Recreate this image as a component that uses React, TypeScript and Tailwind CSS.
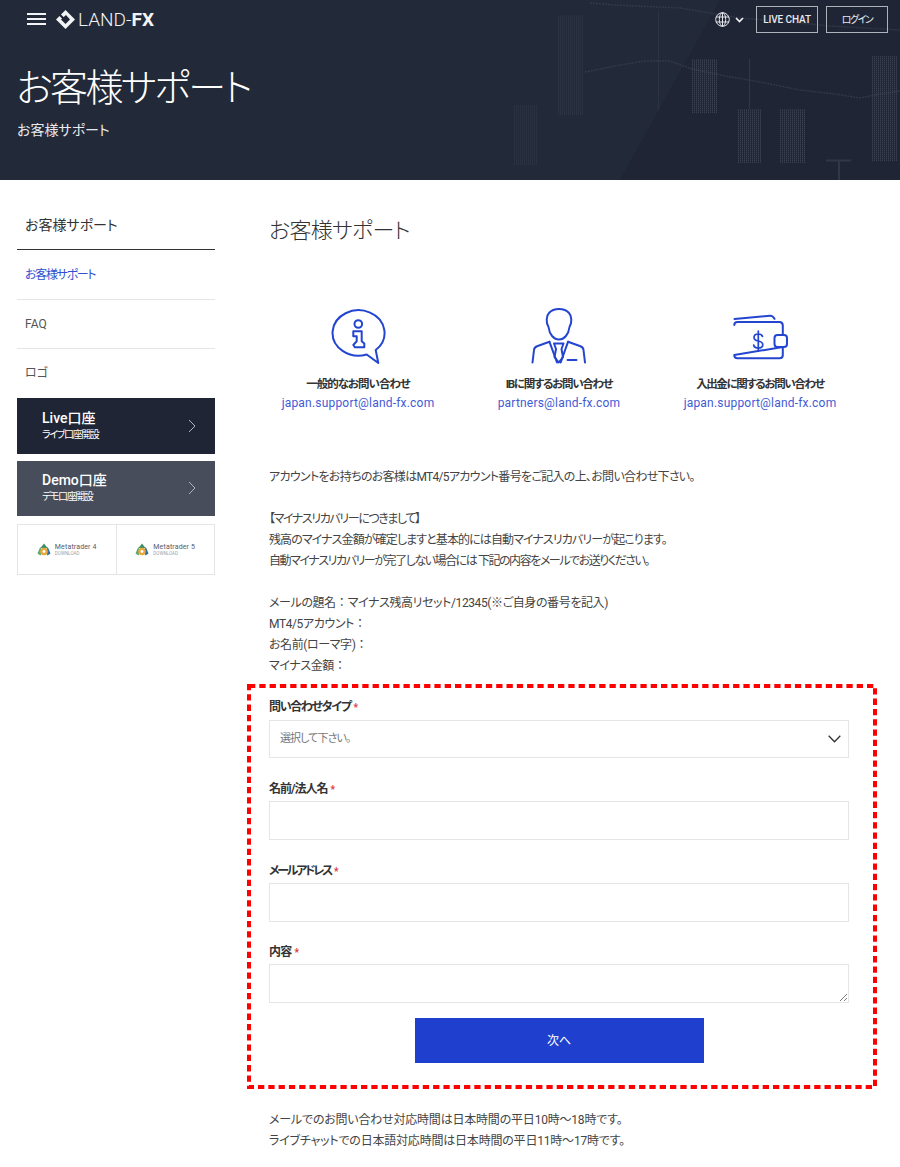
import React from "react";

function HeaderChart() {
  const candles = [
    [513, 105, 24, 60, 0.3],
    [558, 15, 25, 100, 0.35],
    [692, 59, 25, 54, 0.8],
    [737, 109, 25, 54, 0.8],
    [780, 109, 25, 54, 0.8],
    [872, 56, 25, 105, 0.8],
  ];
  return (
    <svg className="absolute inset-0" width="900" height="180" viewBox="0 0 900 180">
      <defs>
        <pattern id="dots" width="2" height="2" patternUnits="userSpaceOnUse">
          <rect width="1" height="2" fill="#a8afc0" opacity="0.12" />
          <rect width="1" height="1" fill="#a8afc0" opacity="0.14" />
        </pattern>
      </defs>
      <polygon points="0,0 720,0 620,180 0,180" fill="#222938" />
      {candles.map(([x, y, w, h, o], i) => (
        <rect key={i} x={x} y={y} width={w} height={h} fill="url(#dots)" opacity={o} />
      ))}
      <g stroke="#4a5262" fill="none" opacity="0.4">
        <line x1="658.5" y1="10" x2="658.5" y2="110" opacity="0.6" />
        <line x1="749.500" y1="59" x2="749.500" y2="109" />
        <line x1="826" y1="160.500" x2="851" y2="160.500" strokeWidth="2" />
        <line x1="839" y1="160" x2="839" y2="180" strokeWidth="2" />
        <polyline strokeDasharray="2 1" strokeWidth="1.500" points="585,72 620,65 645,61 670,61 692,69 720,75 760,82 800,90 835,94 860,98 880,94 900,91" />
        <polyline strokeDasharray="2 1" strokeWidth="1.500" points="590,3 615,5 680,8 740,18 800,23 830,26 900,30" />
      </g>
    </svg>
  );
}

function InfoIcon() {
  return (
    <svg width="60" height="60" viewBox="0 0 60 60" fill="none" stroke="#2345d0" strokeWidth="2" strokeLinejoin="round" strokeLinecap="round">
      <path d="M47.700 43 L50.300 56 L38.700 47.500 A26 22.700 0 1 1 47.700 43 Z" />
      <circle cx="30.300" cy="17" r="3.800" />
      <path d="M25.300 24.300 H33.700 V34.300 L36.300 36.600 V40.300 H27 L25.300 38 L28.700 34.300 V29.300 H25.300 Z" />
    </svg>
  );
}

function PersonIcon() {
  return (
    <svg width="60" height="60" viewBox="0 2 60 60" fill="none" stroke="#2345d0" strokeWidth="2" strokeLinejoin="round" strokeLinecap="round">
      <path d="M19.500 22 C17 18 17 11 20 8 C23 4.500 27 4 30 4 C33 4 37 4.500 40 8 C43 11 43 18 40.500 22 C39.500 30 35 34.500 30 34.500 C25 34.500 20.500 30 19.500 22 Z" />
      <path d="M3.500 57.500 L5 45 C5.200 43 6 42 8 41.200 L20.500 36.800" />
      <path d="M56 57.500 L54.500 45 C54.300 43 53.500 42 51.500 41.200 L39 36.800" />
      <path d="M20.500 36.800 L28 57.500 M39 36.800 L31.700 57.500" />
      <path d="M25 38.500 H34.500 L32.500 44 L34 52 L29.800 57.500 L25.500 52 L27 44 Z" />
      <path d="M38.500 55 H47.500" />
    </svg>
  );
}

function WalletIcon() {
  return (
    <svg width="55" height="46" viewBox="0 0 55 46" fill="none" stroke="#2345d0" strokeWidth="2" strokeLinejoin="round" strokeLinecap="round">
      <path d="M1.500 5 L37 1.800 C39 1.700 40.500 3 41.500 4.800" />
      <path d="M1.300 11 C1.300 9 2.500 8 4.500 8 H46.500 C48.500 8 49.800 9.500 49.800 11.500 V21 M49.800 33 V41 C49.800 43 48.500 44.300 46.500 44.300 H4.500 C2.500 44.300 1.300 43 1.300 41 Z" />
      <rect x="41.500" y="21" width="12.500" height="12" rx="3" />
      <path d="M29.500 22.500 C29 20.800 27.500 20 25.300 20 C22.800 20 21 21.300 21 23.500 C21 25.800 22.800 26.500 25.300 27 C27.800 27.500 29.800 28.300 29.800 30.700 C29.800 33 27.800 34 25.300 34 C22.800 34 21 33 20.700 31 M25.300 17 V37" strokeWidth="1.700" />
    </svg>
  );
}

function MtLogo({ n }: { n: string }) {
  return (
    <div className="flex flex-1 items-center justify-center gap-[4px]">
      <svg width="14" height="14" viewBox="0 0 14 14">
        <path d="M7 0.500 L10.500 5 L3.500 5 Z" fill="#3f8f62" />
        <path d="M3.200 4 L0.500 10.500 L3.500 12.500 L5.500 8 Z" fill="#5aa777" />
        <path d="M10.800 4 L13.500 10.500 L10.500 12.500 L8.500 8 Z" fill="#2f6f9f" />
        <circle cx="7" cy="8.500" r="3.800" fill="#eba83a" />
        <circle cx="7" cy="8.500" r="1.400" fill="#fff" />
      </svg>
      <div className="flex flex-col">
        <span className="font-['Roboto',sans-serif] text-[7px] leading-[8px] tracking-[0.15px] text-[#555b66]">Metatrader {n}</span>
        <span className="font-['Roboto',sans-serif] text-[4.500px] leading-[6px] text-[#9a9fa8]">DOWNLOAD</span>
      </div>
    </div>
  );
}

function CtaCard({ title, sub, cls }: { title: string; sub: string; cls: string }) {
  return (
    <div className={`flex items-center justify-between pl-[25px] pr-[19px] ${cls}`}>
      <div className="flex flex-col pb-[3px]">
        <span className="text-[14px] font-medium leading-[20px] text-white">{title}</span>
        <span className="text-[10px] leading-[14px] tracking-[-1.4px] text-white">{sub}</span>
      </div>
      <svg className="mb-[1px]" width="8" height="14" viewBox="0 0 8 14" fill="none" stroke="#aeb3bd" strokeWidth="1">
        <path d="M1 1 L7 7 L1 13" />
      </svg>
    </div>
  );
}

function Label({ children, track }: { children: React.ReactNode; track: string }) {
  return (
    <div className="h-[14px] text-[12px] font-bold leading-[14px] text-[#333]">
      <span className={track}>{children}</span>
      <span className="ml-[3px] text-[10px] text-[#d9363e]">*</span>
    </div>
  );
}

function Contact({ icon, title, mail, track }: { icon: React.ReactNode; title: string; mail: string; track: string }) {
  return (
    <div className="flex w-[178px] flex-col items-center">
      <div className="flex h-[60px] items-center justify-center">{icon}</div>
      <div className={`mt-[8px] text-[11.500px] font-bold leading-[18px] text-[#333] ${track}`}>{title}</div>
      <div className="font-['Roboto',sans-serif] text-[12px] leading-[20px] tracking-[0.2px] text-[#3f5bd6]">{mail}</div>
    </div>
  );
}

function Colon() {
  return <span className="tracking-normal [font-feature-settings:normal]">：</span>;
}

export default function App() {
  return (
    <div className="h-[1167px] w-[900px] overflow-hidden bg-white font-['Roboto','Noto_Sans_CJK_JP',sans-serif] [font-feature-settings:'palt']">
      <header className="relative h-[180px] bg-[#1f2535]">
        <HeaderChart />
        <div className="relative flex h-[39px] items-center pl-[27px] pr-[12px]">
          <svg width="20" height="13" viewBox="0 0 20 13" fill="#f2f3f5">
            <rect y="0" width="19" height="2" />
            <rect y="5" width="19" height="2" />
            <rect y="10" width="19" height="2" />
          </svg>
          <svg className="ml-[8px]" width="21" height="21" viewBox="0 0 21 21" fill="none">
            <path d="M10.500 1 L20 10.500 L10.500 20 L1 10.500 Z" fill="#f2f3f5" />
            <path d="M11 6 L15 10.500 L10.500 15 L6 10.500 Z" fill="#1f2535" />
            <path d="M5.500 5 L10 9.500 L8.500 11 L4 6.500 Z" fill="#1f2535" />
          </svg>
          <div className="ml-[2px] flex items-center text-[19px] leading-none text-[#f2f3f5]">
            <span className="font-light">LAND-</span>
            <span className="font-bold">FX</span>
          </div>
          <div className="flex-1" />
          <svg width="15" height="15" viewBox="0 0 15 15" fill="none" stroke="#e4e6ea" strokeWidth="1">
            <circle cx="7.500" cy="7.500" r="6.800" />
            <ellipse cx="7.500" cy="7.500" rx="3.200" ry="6.800" />
            <path d="M1 5 H14 M1 10 H14 M7.500 0.700 V14.300" />
          </svg>
          <svg className="ml-[5px]" width="9" height="6" viewBox="0 0 9 6" fill="none" stroke="#f2f3f5" strokeWidth="1.700">
            <path d="M1 1 L4.500 4.500 L8 1" />
          </svg>
          <div className="ml-[12px] flex h-[27px] w-[62px] items-center justify-center border border-[#aeb2ba] text-[10px] font-medium tracking-[-0.1px] text-[#e8eaee]">LIVE CHAT</div>
          <div className="ml-[8px] flex h-[27px] w-[62px] items-center justify-center border border-[#aeb2ba] text-[10px] tracking-[-1.5px] text-[#e8eaee]">ログイン</div>
        </div>
        <div className="relative pl-[16px]">
          <h1 className="mt-[24px] text-[38px] font-light leading-[50px] tracking-[-2.500px] text-white">お客様サポート</h1>
          <p className="mt-[7px] pl-[1px] text-[14px] leading-[20px] text-[#e8eaee]">お客様サポート</p>
        </div>
      </header>

      <div className="flex pl-[17px] pr-[51px]">
        <aside className="w-[198px]">
          <div className="flex h-[70px] items-end border-b border-[#333] pb-[14px] pl-[8px] text-[14px] leading-[20px] text-[#333]">お客様サポート</div>
          <div className="flex h-[50px] items-center border-b border-[#e5e5e5] pl-[8px] text-[12px] tracking-[-1.300px] text-[#2f4fd0]">お客様サポート</div>
          <div className="flex h-[49px] items-center border-b border-[#e5e5e5] pl-[8px] text-[12px] text-[#555]">FAQ</div>
          <div className="flex h-[48px] items-center pl-[8px] text-[12px] text-[#555]">ロゴ</div>
          <CtaCard title="Live口座" sub="ライブ口座開設" cls="mt-[1px] h-[56px] bg-[#1f2535]" />
          <CtaCard title="Demo口座" sub="デモ口座開設" cls="mt-[7px] h-[55px] bg-[#474d5a]" />
          <div className="mt-[8px] flex h-[51px] divide-x divide-[#e5e5e5] border border-[#e5e5e5]">
            <MtLogo n="4" />
            <MtLogo n="5" />
          </div>
        </aside>

        <main className="ml-[54px] flex-1">
          <h2 className="mt-[35px] text-[22px] font-light leading-[32px] tracking-[-0.700px] text-[#333]">お客様サポート</h2>
          <div className="mt-[60px] flex justify-between">
            <Contact icon={<InfoIcon />} title="一般的なお問い合わせ" mail="japan.support@land-fx.com" track="tracking-[-1px]" />
            <Contact icon={<PersonIcon />} title="IBに関するお問い合わせ" mail="partners@land-fx.com" track="tracking-[-1.300px]" />
            <Contact icon={<WalletIcon />} title="入出金に関するお問い合わせ" mail="japan.support@land-fx.com" track="tracking-[-1.400px]" />
          </div>
          <div className="mt-[54px] text-[12px] leading-[21px] tracking-[-0.400px] text-[#444]">
            <p className="tracking-[-0.700px]">アカウントをお持ちのお客様はMT4/5アカウント番号をご記入の上、お問い合わせ下さい。</p>
            <p className="mt-[21px] tracking-[-1.400px]">【マイナスリカバリーにつきまして】</p>
            <p className="tracking-[-0.900px]">残高のマイナス金額が確定しますと基本的には自動マイナスリカバリーが起こります。</p>
            <p className="tracking-[-1.450px]">自動マイナスリカバリーが完了しない場合には 下記の内容をメールでお送りください。</p>
            <p className="mt-[21px]">メールの題名<Colon />マイナス残高リセット/12345(※ご自身の番号を記入)</p>
            <p>MT4/5アカウント<Colon /></p>
            <p>お名前(ローマ字)<Colon /></p>
            <p>マイナス金額<Colon /></p>
          </div>

          <div className="relative -mx-[22px] mt-[7px] h-[405px] px-[22px] pt-[16px]">
            <svg className="absolute left-0 top-0" width="630" height="405" viewBox="0 0 630 405" fill="none">
              <rect x="2" y="2" width="626" height="401" stroke="#ff0000" strokeWidth="4" strokeDasharray="6.300 4" />
            </svg>
            <Label track="tracking-[-1.300px]">問い合わせタイプ</Label>
            <div className="mt-[6px] flex h-[38px] items-center justify-between border border-[#e5e5e5] pl-[10px] pr-[7px] text-[11px] tracking-[-0.900px] text-[#777]">
              <span>選択して下さい。</span>
              <svg width="13" height="8" viewBox="0 0 13 8" fill="none" stroke="#333" strokeWidth="1.300">
                <path d="M0.700 0.700 L6.500 6.800 L12.300 0.700" />
              </svg>
            </div>
            <div className="mt-[24px]"><Label track="tracking-[-1px]">名前/法人名</Label></div>
            <div className="mt-[5px] h-[39px] border border-[#e5e5e5]" />
            <div className="mt-[24px]"><Label track="tracking-[-2.300px]">メールアドレス</Label></div>
            <div className="mt-[5px] h-[39px] border border-[#e5e5e5]" />
            <div className="mt-[23px]"><Label track="tracking-[-0.700px]">内容</Label></div>
            <div className="relative mt-[5px] h-[39px] border border-[#e5e5e5]">
              <svg className="absolute bottom-0 right-0" width="9" height="9" viewBox="0 0 9 9" stroke="#777" strokeWidth="1">
                <path d="M1 8 L8 1 M5 8 L8 5" />
              </svg>
            </div>
            <div className="mt-[15px] flex justify-center">
              <button className="h-[45px] w-[289px] bg-[#1f40cf] text-[12px] text-white">次へ</button>
            </div>
          </div>

          <div className="mt-[21px] text-[12px] leading-[21px] tracking-[-0.200px] text-[#444]">
            <p>メールでのお問い合わせ対応時間は日本時間の平日10時～18時です。</p>
            <p>ライブチャットでの日本語対応時間は日本時間の平日11時～17時です。</p>
          </div>
        </main>
      </div>
    </div>
  );
}
